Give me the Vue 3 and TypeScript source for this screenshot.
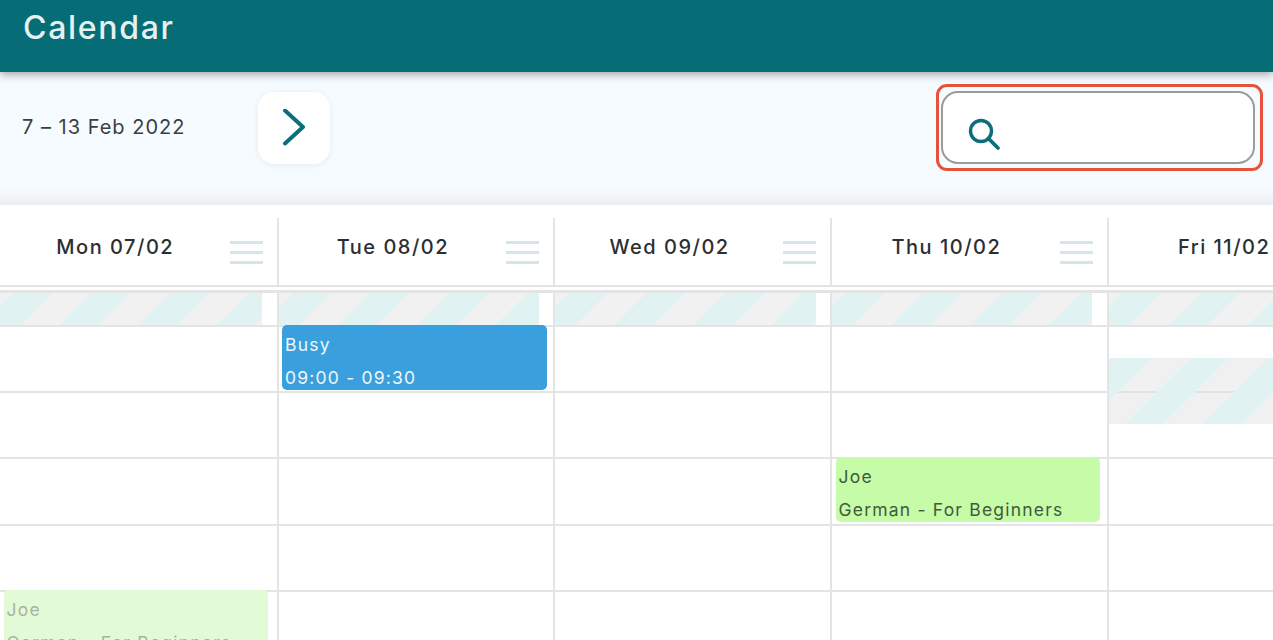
<script setup lang="ts">
interface Booking {
  slot: number
  kind: 'busy' | 'lesson' | 'past'
  title: string
  detail: string
}

interface Day {
  label: string
  bookings: Booking[]
  blocked?: number
}

const lesson = 'German - For Beginners'

const days: Day[] = [
  { label: 'Mon 07/02', bookings: [{ slot: 4, kind: 'past', title: 'Joe', detail: lesson }] },
  { label: 'Tue 08/02', bookings: [{ slot: 0, kind: 'busy', title: 'Busy', detail: '09:00 - 09:30' }] },
  { label: 'Wed 09/02', bookings: [] },
  { label: 'Thu 10/02', bookings: [{ slot: 2, kind: 'lesson', title: 'Joe', detail: lesson }] },
  { label: 'Fri 11/02', bookings: [], blocked: 0 },
]

const slots = [0, 1, 2, 3, 4]
</script>

<template>
  <div class="page">
    <header class="topbar">
      <h1>Calendar</h1>
    </header>

    <section class="toolbar">
      <span class="range">7 – 13 Feb 2022</span>
      <button class="next" type="button" aria-label="Next week">
        <svg width="26" height="38" viewBox="0 0 26 38" fill="none">
          <path d="M4 1.5 L22 18 L4 34.5" stroke="#0b6f7b" stroke-width="4" stroke-linecap="round" stroke-linejoin="round" />
        </svg>
      </button>
      <div class="search">
        <svg width="34" height="34" viewBox="0 0 34 34" fill="none">
          <circle cx="14" cy="14" r="10.5" stroke="#0b6f7b" stroke-width="3.4" />
          <path d="M21.5 21.5 L31 31" stroke="#0b6f7b" stroke-width="3.8" stroke-linecap="round" />
        </svg>
        <span class="highlight" />
      </div>
    </section>

    <section class="week">
      <div v-for="day in days" :key="day.label" class="day">
        <div class="head">
          <span class="label">{{ day.label }}</span>
          <span class="menu"><i /><i /><i /></span>
        </div>
        <div class="allday"><div class="stripes" /></div>
        <div v-for="s in slots" :key="s" class="slot">
          <div v-if="day.blocked === s" class="blocked" />
          <template v-for="b in day.bookings" :key="b.title">
            <div v-if="b.slot === s" class="booking" :class="b.kind">
              <span>{{ b.title }}</span>
              <span>{{ b.detail }}</span>
            </div>
          </template>
        </div>
      </div>
    </section>
  </div>
</template>

<style scoped>
.page {
  width: 1273px;
  height: 640px;
  overflow: hidden;
  background: #fff;
  font-family: Inter, "Noto Sans", sans-serif;
  color: #2b2f33;
}

.topbar {
  position: relative;
  z-index: 1;
  height: 72px;
  padding: 0 0 18px 23px;
  box-sizing: border-box;
  display: flex;
  align-items: center;
  background: #066d77;
  box-shadow: 0 2px 9px rgba(0, 0, 0, 0.38);
}
.topbar h1 {
  margin: 0;
  font-size: 32px;
  font-weight: 500;
  letter-spacing: 1.7px;
  color: #e4f1f1;
}

.toolbar {
  height: 133px;
  box-sizing: border-box;
  padding: 20px 18px 0 22px;
  display: flex;
  align-items: flex-start;
  background: linear-gradient(#f6fbff 0, #f6fbff 88%, #ebeff2 100%);
}
.range {
  width: 236px;
  line-height: 70px;
  font-size: 20px;
  letter-spacing: 1px;
  color: #3a3f44;
}
.next {
  width: 72px;
  height: 72px;
  padding: 0;
  border: 0;
  border-radius: 16px;
  background: #fff;
  box-shadow: 0 1px 6px rgba(0, 0, 0, 0.07);
  display: flex;
  align-items: center;
  justify-content: center;
}
.search {
  position: relative;
  margin-top: -1px;
  margin-left: auto;
  width: 314px;
  height: 73px;
  box-sizing: border-box;
  padding: 24px 0 0 24px;
  border: 2px solid #9b9b9b;
  border-radius: 17px;
  background: #fff;
}
.search svg {
  display: block;
}
.highlight {
  position: absolute;
  inset: -9px -10px -9px -7px;
  border: 3.5px solid #e5533d;
  border-radius: 11px;
}

.week {
  display: grid;
  grid-template-columns: 278.5px repeat(4, 276.75px);
}
.day {
  min-width: 0;
}
.head {
  position: relative;
  height: 52px;
  margin-top: 13px;
  padding: 15px 46px 0 0;
  border-right: 2px solid #e4e4e4;
  border-bottom: 2px solid #e4e4e4;
  display: flex;
  justify-content: center;
  white-space: nowrap;
}
.label {
  font-size: 20px;
  font-weight: 500;
  line-height: 28px;
  letter-spacing: 1.5px;
  color: #2b2f33;
}
.menu {
  position: absolute;
  top: 23px;
  right: 14px;
  width: 33px;
  display: flex;
  flex-direction: column;
  gap: 7px;
}
.menu i {
  height: 3px;
  background: #d6e6e8;
}
.day:last-child .head,
.day:last-child .slot,
.day:last-child .allday {
  border-right: 0;
  padding-right: 0;
}
.day:last-child .head {
  padding-right: 46px;
}

.allday {
  height: 36.5px;
  margin-top: 3px;
  padding-right: 14.5px;
  border-top: 3px solid #e4e4e4;
  border-right: 2px solid #e4e4e4;
  border-bottom: 2px solid #e4e4e4;
  box-sizing: border-box;
}
.stripes {
  height: 100%;
  background: repeating-linear-gradient(135deg, #f1f1f1 0 9.5px, #e0f2f2 9.5px 37.2px, #f1f1f1 37.2px 55.4px);
}

.slot {
  position: relative;
  height: 66.4px;
  box-sizing: border-box;
  border-right: 2px solid #e4e4e4;
  border-bottom: 2px solid #e4e4e4;
}
.blocked {
  position: absolute;
  top: 31px;
  left: 0;
  right: 0;
  height: 66px;
  background: repeating-linear-gradient(135deg, rgba(226, 226, 226, 0.5) 0 2px, #e0f2f2 2px 29.7px, rgba(226, 226, 226, 0.5) 29.7px 55.4px);
}
.booking {
  position: absolute;
  top: -2px;
  left: 3.5px;
  width: 264.5px;
  height: 65px;
  box-sizing: border-box;
  padding: 3px 3px 0;
  border-radius: 5px;
  display: flex;
  flex-direction: column;
  font-size: 17.5px;
  line-height: 33px;
  letter-spacing: 1.2px;
  white-space: nowrap;
}
.busy {
  background: #3aa0dd;
  color: #eef7fc;
}
.lesson {
  background: #c6fba8;
  color: #3f5a3c;
}
.past {
  background: #e2fad6;
  color: #a9b3a4;
}
</style>

<style>
html,
body {
  background: #fff;
}
</style>
